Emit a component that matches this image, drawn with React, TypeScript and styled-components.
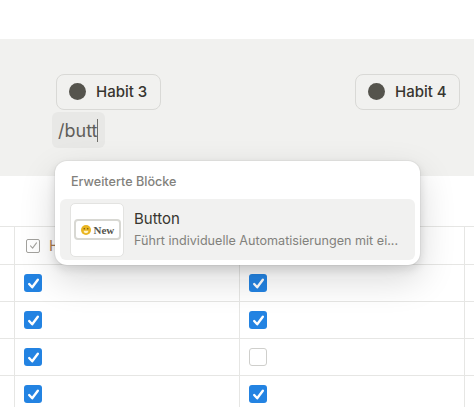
import React from 'react'
import styled, {createGlobalStyle} from 'styled-components'

const Global = createGlobalStyle`
  html,body{
    margin:0;
    padding:0;
    background:#fff;
    overflow:hidden;
  }
  body{
    font-family:Inter,"Noto Sans",sans-serif;
  }
`
const Page = styled.div`
  position:relative;
  width:474px;
  height:407px;
  overflow:hidden;
  padding-top:39px;
  box-sizing:border-box;
`
const Band = styled.div`
  height:137px;
  background:#f1f1ef;
  padding:35px 14px 0 52px;
  box-sizing:border-box;
`
const ChipRow = styled.div`
  display:flex;
  justify-content:space-between;
  padding-left:4px;
  height:38px;
`
const Chip = styled.div`
  width:105px;
  height:36px;
  box-sizing:border-box;
  border:1px solid #d9d9d6;
  border-radius:8px;
  display:flex;
  align-items:center;
  gap:10px;
  padding:0 0 1px 12px;
  font-size:15px;
  font-weight:500;
  color:#37352f;
`
const Dot = styled.span`
  width:17px;
  height:17px;
  border-radius:50%;
  background:#55544d;
`
const SlashInput = styled.div`
  width:53px;
  height:36px;
  box-sizing:border-box;
  background:#e8e8e6;
  border-radius:6px;
  padding-left:6px;
  display:flex;
  align-items:center;
  font-size:18px;
  color:#5f5e5a;
`
const Caret = styled.span`
  width:1px;
  height:23px;
  margin-left:-1px;
  background:#6f6e69;
`
const Table = styled.div`
  margin-top:50px;
  display:grid;
  grid-template-columns:14px 225px 225px 10px;
  grid-template-rows:38px;
  grid-auto-rows:37px;
  border-top:1px solid #e6e6e4;
`
const Cell = styled.div<{$first?:boolean}>`
  box-sizing:border-box;
  border-bottom:1px solid #e6e6e4;
  border-left:${p=>p.$first ? 'none' : '1px solid #e6e6e4'};
  display:flex;
  align-items:center;
  padding-left:9px;
  gap:9px;
`
const HeadLabel = styled.span`
  font-size:15px;
  color:#a87b4f;
`
const Box = styled.span<{$on?:boolean}>`
  width:18px;
  height:18px;
  box-sizing:border-box;
  border-radius:3px;
  display:flex;
  align-items:center;
  justify-content:center;
  background:${p=>p.$on ? '#2383e2' : '#fff'};
  border:${p=>p.$on ? 'none' : '1.5px solid #cfcfcc'};
`
const HeadIcon = styled.span`
  width:14px;
  height:14px;
  margin-left:2px;
  box-sizing:border-box;
  border:1.5px solid #a3a29e;
  border-radius:2px;
  display:flex;
  align-items:center;
  justify-content:center;
`
const Menu = styled.div`
  position:absolute;
  left:55px;
  top:161px;
  width:365px;
  height:104px;
  box-sizing:border-box;
  background:#fff;
  border-radius:12px;
  padding:13px 5px 5px;
  box-shadow:0 0 0 1px rgba(15,15,15,.04),0 4px 10px rgba(15,15,15,.12),0 14px 36px rgba(15,15,15,.16);
`
const MenuTitle = styled.div`
  font-size:12.6px;
  line-height:16px;
  color:#82817c;
  padding-left:11px;
  font-weight:500;
  margin-bottom:9px;
`
const MenuItem = styled.div`
  height:61px;
  background:#f1f1f0;
  border-radius:6px;
  display:flex;
  align-items:center;
  padding-left:10px;
  gap:10px;
`
const Thumb = styled.div`
  width:54px;
  height:54px;
  box-sizing:border-box;
  background:#fff;
  border:1px solid #e3e3e1;
  border-radius:5px;
  display:flex;
  align-items:center;
  justify-content:center;
`
const NewTag = styled.div`
  width:47px;
  height:21px;
  box-sizing:border-box;
  border:2px solid #d8d8d3;
  border-radius:4px;
  display:flex;
  align-items:center;
  gap:3px;
  padding-left:5px;
  font-family:"Liberation Serif",serif;
  font-weight:700;
  font-size:11px;
  color:#55544d;
`
const ItemText = styled.div`
  display:flex;
  flex-direction:column;
  gap:5px;
  min-width:0;
  padding-bottom:1px;
`
const ItemName = styled.div`
  font-size:15px;
  line-height:19px;
  color:#37352f;
`
const ItemDesc = styled.div`
  font-size:12.6px;
  line-height:16px;
  color:#82817c;
  white-space:nowrap;
`

const Check = ({size=13,stroke='#fff',width=2.2}:{size?:number;stroke?:string;width?:number})=>(
  <svg width={size} height={size} viewBox="0 0 12 12" fill="none">
    <path d="M2 6.5 L4.8 9.5 L10 2.5" stroke={stroke} strokeWidth={width} strokeLinecap="round" strokeLinejoin="round"/>
  </svg>
)

const Smile = ()=>(
  <svg width="10" height="10" viewBox="0 0 10 10">
    <circle cx="5" cy="5" r="5" fill="#e9b522"/>
    <circle cx="3.3" cy="3.8" r=".8" fill="#7a5b10"/>
    <circle cx="6.7" cy="3.8" r=".8" fill="#7a5b10"/>
    <path d="M2.6 5.8 H7.4 C7.2 7.6 6 8.2 5 8.2 C4 8.2 2.8 7.6 2.6 5.8 Z" fill="#fff3c9"/>
  </svg>
)

const rows = [[true,true],[true,true],[true,false],[true,true]]

const App = ()=>{
  return(
    <Page>
      <Global/>
      <Band>
        <ChipRow>
          <Chip><Dot/>Habit 3</Chip>
          <Chip><Dot/>Habit 4</Chip>
        </ChipRow>
        <SlashInput>/butt<Caret/></SlashInput>
      </Band>
      <Table>
        <Cell $first/>
        <Cell>
          <HeadIcon><Check size={9} stroke="#a3a29e" width={1.4}/></HeadIcon>
          <HeadLabel>Habit 3</HeadLabel>
        </Cell>
        <Cell/>
        <Cell/>
        {rows.map((r,i)=>(
          <React.Fragment key={i}>
            <Cell $first/>
            {r.map((on,j)=>(
              <Cell key={j}>
                <Box $on={on}>{on && <Check/>}</Box>
              </Cell>
            ))}
            <Cell/>
          </React.Fragment>
        ))}
      </Table>
      <Menu>
        <MenuTitle>Erweiterte Blöcke</MenuTitle>
        <MenuItem>
          <Thumb>
            <NewTag><Smile/>New</NewTag>
          </Thumb>
          <ItemText>
            <ItemName>Button</ItemName>
            <ItemDesc>Führt individuelle Automatisierungen mit ei...</ItemDesc>
          </ItemText>
        </MenuItem>
      </Menu>
    </Page>
  )
}

export default App
